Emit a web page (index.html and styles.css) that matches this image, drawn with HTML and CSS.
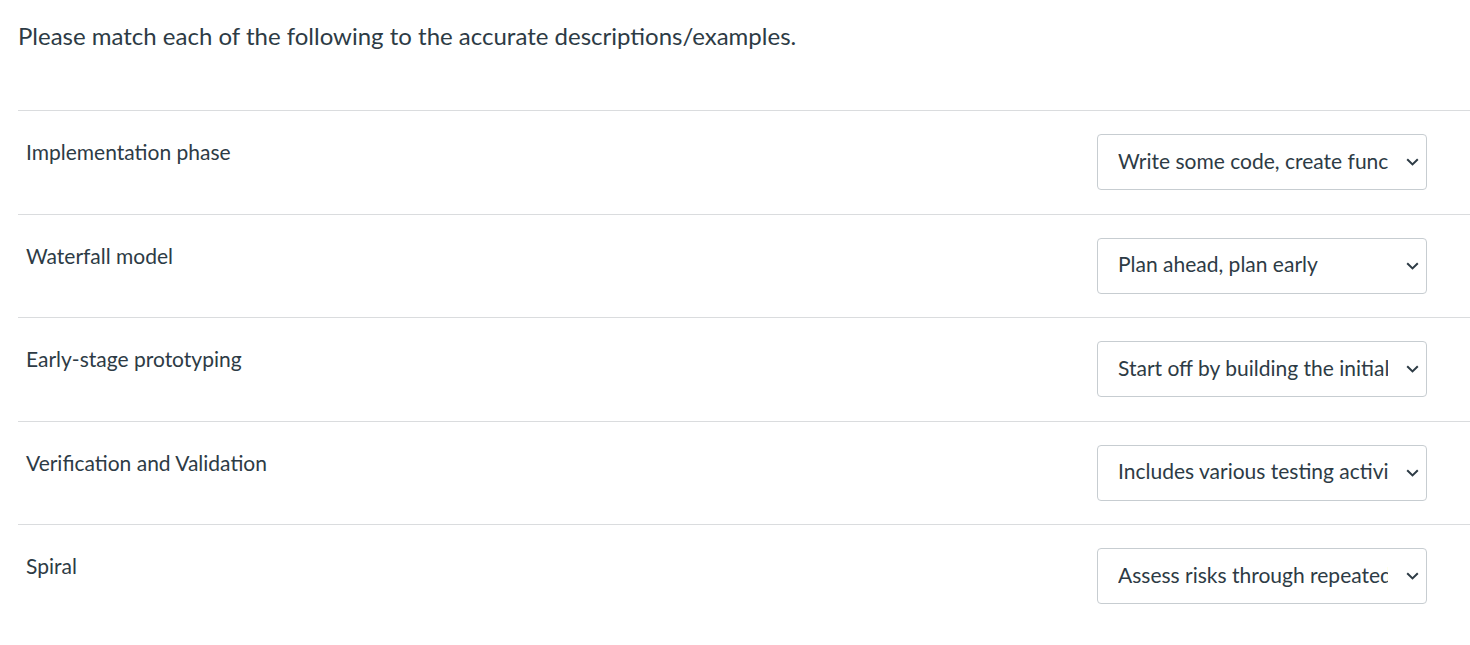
FILE: index.html
```html
<!DOCTYPE html>
<html>
<head>
<meta charset="utf-8">
<link rel="stylesheet" href="styles.css">
</head>
<body>
<div class="question">
  <div class="prompt">Please match each of the following to the accurate descriptions/examples.</div>
  <div class="answers">
    <div class="row">
      <div class="label">Implementation phase</div>
      <div class="select"><span class="value">Write some code, create functions</span><svg class="chev" viewBox="0 0 13 8"><path d="M1.2 1.2 L6.5 6.4 L11.8 1.2" fill="none" stroke="#2d3b45" stroke-width="2"/></svg></div>
    </div>
    <div class="row">
      <div class="label">Waterfall model</div>
      <div class="select"><span class="value">Plan ahead, plan early</span><svg class="chev" viewBox="0 0 13 8"><path d="M1.2 1.2 L6.5 6.4 L11.8 1.2" fill="none" stroke="#2d3b45" stroke-width="2"/></svg></div>
    </div>
    <div class="row">
      <div class="label">Early-stage prototyping</div>
      <div class="select"><span class="value">Start off by building the initial version</span><svg class="chev" viewBox="0 0 13 8"><path d="M1.2 1.2 L6.5 6.4 L11.8 1.2" fill="none" stroke="#2d3b45" stroke-width="2"/></svg></div>
    </div>
    <div class="row">
      <div class="label">Verification and Validation</div>
      <div class="select"><span class="value">Includes various testing activities</span><svg class="chev" viewBox="0 0 13 8"><path d="M1.2 1.2 L6.5 6.4 L11.8 1.2" fill="none" stroke="#2d3b45" stroke-width="2"/></svg></div>
    </div>
    <div class="row">
      <div class="label">Spiral</div>
      <div class="select"><span class="value">Assess risks through repeated cycles</span><svg class="chev" viewBox="0 0 13 8"><path d="M1.2 1.2 L6.5 6.4 L11.8 1.2" fill="none" stroke="#2d3b45" stroke-width="2"/></svg></div>
    </div>
  </div>
</div>
</body>
</html>
```
FILE: styles.css
```css
html, body {
  margin: 0;
  padding: 0;
  background: #ffffff;
  overflow: hidden;
}
body {
  font-family: Lato, "Open Sans", sans-serif;
  color: #2d3b45;
}
.question {
  padding: 21px 0 0 18px;
}
.prompt {
  font-size: 24px;
  line-height: 30px;
  height: 89px;
}
.row {
  box-sizing: border-box;
  border-top: 1px solid #dadcde;
  padding: 23px 0 23.5px 8px;
  display: flex;
  justify-content: space-between;
  align-items: flex-start;
  width: 1452px;
}
.label {
  font-size: 21px;
  line-height: 28px;
  padding-top: 4px;
}
.select {
  box-sizing: border-box;
  width: 330px;
  height: 56px;
  margin-right: 43px;
  border: 1px solid #c7cdd1;
  border-radius: 4px;
  display: flex;
  align-items: center;
  padding: 0 7px 4px 20px;
  font-size: 21px;
}
.value {
  flex: none;
  width: 270px;
  white-space: nowrap;
  overflow: hidden;
}
.chev {
  width: 13px;
  height: 8px;
  margin-left: auto;
  margin-top: 4px;
  flex: none;
}
```
